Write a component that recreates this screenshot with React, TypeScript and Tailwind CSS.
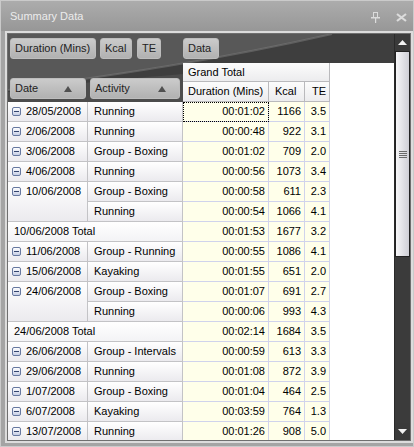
import React from 'react';

type Row = {
  kind: 'row' | 'total';
  date?: string;
  span?: number;
  act?: string;
  dur: string;
  kcal: string;
  te: string;
};

const rows: Row[] = [
  { kind: 'row', date: '28/05/2008', span: 1, act: 'Running', dur: '00:01:02', kcal: '1166', te: '3.5' },
  { kind: 'row', date: '2/06/2008', span: 1, act: 'Running', dur: '00:00:48', kcal: '922', te: '3.1' },
  { kind: 'row', date: '3/06/2008', span: 1, act: 'Group - Boxing', dur: '00:01:02', kcal: '709', te: '2.0' },
  { kind: 'row', date: '4/06/2008', span: 1, act: 'Running', dur: '00:00:56', kcal: '1073', te: '3.4' },
  { kind: 'row', date: '10/06/2008', span: 2, act: 'Group - Boxing', dur: '00:00:58', kcal: '611', te: '2.3' },
  { kind: 'row', act: 'Running', dur: '00:00:54', kcal: '1066', te: '4.1' },
  { kind: 'total', date: '10/06/2008 Total', dur: '00:01:53', kcal: '1677', te: '3.2' },
  { kind: 'row', date: '11/06/2008', span: 1, act: 'Group - Running', dur: '00:00:55', kcal: '1086', te: '4.1' },
  { kind: 'row', date: '15/06/2008', span: 1, act: 'Kayaking', dur: '00:01:55', kcal: '651', te: '2.0' },
  { kind: 'row', date: '24/06/2008', span: 2, act: 'Group - Boxing', dur: '00:01:07', kcal: '691', te: '2.7' },
  { kind: 'row', act: 'Running', dur: '00:00:06', kcal: '993', te: '4.3' },
  { kind: 'total', date: '24/06/2008 Total', dur: '00:02:14', kcal: '1684', te: '3.5' },
  { kind: 'row', date: '26/06/2008', span: 1, act: 'Group - Intervals', dur: '00:00:59', kcal: '613', te: '3.3' },
  { kind: 'row', date: '29/06/2008', span: 1, act: 'Running', dur: '00:01:08', kcal: '872', te: '3.9' },
  { kind: 'row', date: '1/07/2008', span: 1, act: 'Group - Boxing', dur: '00:01:04', kcal: '464', te: '2.5' },
  { kind: 'row', date: '6/07/2008', span: 1, act: 'Kayaking', dur: '00:03:59', kcal: '764', te: '1.3' },
  { kind: 'row', date: '13/07/2008', span: 1, act: 'Running', dur: '00:01:26', kcal: '908', te: '5.0' },
];

const MinusBox = () => (
  <span className="w-[9px] h-[9px] rounded-[2px] border border-[#66789f] bg-linear-to-b from-white to-[#c6cee4] flex items-center justify-center shrink-0">
    <span className="w-[5px] h-[1px] bg-[#33446e]" />
  </span>
);

const SortArrow = () => (
  <svg width="8" height="6" viewBox="0 0 8 6" className="shrink-0">
    <path d="M4 0 L8 6 L0 6 Z" fill="#505050" />
  </svg>
);

const btn =
  'h-[21px] rounded-[3px] bg-linear-to-b from-[#cbcbcb] to-[#b1b1b1] border border-[#bdbdbd] flex items-center pl-[4px] text-[#222] whitespace-nowrap';

const FieldButton: React.FC<{ label: string; w: string }> = ({ label, w }) => (
  <div className={`${w} ${btn}`}>{label}</div>
);

const rowHead = 'bg-linear-to-b from-white to-[#ebeaee] border-r border-b border-[#c3c3c6]';
const dataCell = 'bg-[#ffffea] border-r border-b border-[#d0d3ec] flex items-center justify-end pr-[3px] h-[20px]';
const colHead = 'border-r border-b border-[#b9b9bc] bg-linear-to-b from-[#fcfcfc] to-[#ececee] flex items-center';

export default function App() {
  return (
    <div className="w-[414px] h-[447px] flex flex-col bg-[#a4a4a4] border border-[#cacaca] overflow-hidden font-['Liberation_Sans',Arial,sans-serif] text-[11px] leading-none">
      {/* Title bar */}
      <div className="h-[30px] shrink-0 flex items-center justify-between pl-[9px] pr-[6px] bg-linear-to-b from-[#acacac] to-[#979797]">
        <span className="text-[#ececec] text-[11px]">Summary Data</span>
        <div className="flex items-center gap-[15px] pt-[2px]">
          <svg width="10" height="11" viewBox="0 0 10 11">
            <rect x="2.5" y="0.5" width="4" height="5" fill="none" stroke="#dcdcdc" />
            <rect x="0" y="5" width="9" height="1.5" fill="#dcdcdc" />
            <rect x="4" y="6" width="1.2" height="5" fill="#dcdcdc" />
          </svg>
          <svg width="11" height="9" viewBox="0 0 11 9">
            <path d="M1 1 L10 8 M10 1 L1 8" stroke="#dcdcdc" strokeWidth="2.2" />
          </svg>
        </div>
      </div>

      {/* Body frame */}
      <div className="flex-1 min-h-0 flex pl-[4px] pb-[3px]">
        <div className="flex-1 min-h-0 flex border-2 border-[#dcdcdc]">
          <div className="flex-1 min-h-0 flex border border-[#6f6f6f]">
            {/* Pivot grid */}
            <div className="flex-1 min-w-0 flex flex-col bg-white overflow-hidden">
              {/* Header area */}
              <div className="relative h-[68px] shrink-0 bg-[#3d3d3d]">
                <svg className="absolute inset-0" width="386" height="68" viewBox="0 0 386 68">
                  <path d="M0 0 H324 C 280 10, 220 22, 160 32 C 100 42, 40 50, 0 56 Z" fill="#585858" />
                  <path d="M0 56 C 40 50, 100 42, 160 32 C 220 22, 280 10, 324 0 H386 V68 H0 Z" fill="#3e3e3e" />
                  <path d="M0 68 V58 C 40 52, 100 46, 175 40 V68 Z" fill="#4c4c4c" />
                  <path d="M324 0 C 280 10, 220 22, 160 32 C 100 42, 40 50, 0 56" fill="none" stroke="#7a7a7a" strokeOpacity="0.55" strokeWidth="2" />
                </svg>
                <div className="relative flex flex-col h-full">
                  {/* Filter fields row */}
                  <div className="h-[29px] flex items-start pt-[4px] pl-[2px]">
                    <FieldButton label="Duration (Mins)" w="w-[86px]" />
                    <div className="ml-[4px]"><FieldButton label="Kcal" w="w-[32px]" /></div>
                    <div className="ml-[5px]"><FieldButton label="TE" w="w-[24px]" /></div>
                    <div className="ml-[22px]"><FieldButton label="Data" w="w-[36px]" /></div>
                  </div>
                  <div className="flex-1 flex">
                    {/* Row field buttons */}
                    <div className="w-[175px] flex items-start pt-[15px] pl-[2px] gap-[4px]">
                      <div className={`w-[76px] ${btn}`}>
                        <span className="w-[49px]">Date</span>
                        <SortArrow />
                      </div>
                      <div className={`w-[90px] ${btn}`}>
                        <span className="w-[63px]">Activity</span>
                        <SortArrow />
                      </div>
                    </div>
                    {/* Column headers */}
                    <div className="flex-1 bg-white flex flex-col">
                      <div className={`w-[147px] h-[19px] pl-[5px] ${colHead}`}>Grand Total</div>
                      <div className="flex h-[20px]">
                        <div className={`w-[86px] pl-[5px] ${colHead}`}>Duration (Mins)</div>
                        <div className={`w-[36px] pl-[6px] ${colHead}`}>Kcal</div>
                        <div className={`w-[25px] pl-[7px] ${colHead}`}>TE</div>
                      </div>
                    </div>
                  </div>
                </div>
              </div>

              {/* Data rows */}
              <div className="grid grid-cols-[80px_95px_86px_36px_25px] auto-rows-[20px] text-black">
                {rows.map((r, i) => (
                  <React.Fragment key={i}>
                    {r.kind === 'total' ? (
                      <div className={`col-start-1 col-span-2 ${rowHead} from-[#fefefe] to-[#f3f3f5] flex items-center pl-[6px]`}>
                        {r.date}
                      </div>
                    ) : (
                      <>
                        {r.date && (
                          <div className={`col-start-1 ${r.span === 2 ? 'row-span-2' : ''} ${rowHead}`}>
                            <div className="h-[19px] flex items-center pl-[4px] gap-[5px]">
                              <MinusBox />
                              <span>{r.date}</span>
                            </div>
                          </div>
                        )}
                        <div className={`col-start-2 ${rowHead} flex items-center pl-[6px]`}>{r.act}</div>
                      </>
                    )}
                    <div className={`col-start-3 ${dataCell} ${i === 0 ? 'outline-1 outline-dotted outline-black -outline-offset-1' : ''}`}>
                      {r.dur}
                    </div>
                    <div className={`col-start-4 ${dataCell}`}>{r.kcal}</div>
                    <div className={`col-start-5 ${dataCell}`}>{r.te}</div>
                  </React.Fragment>
                ))}
              </div>
            </div>

            {/* Scrollbar */}
            <div className="w-[16px] shrink-0 flex flex-col bg-[#3a3a3a] border-l border-[#2a2a2a]">
              <div className="h-[17px] flex items-center justify-center">
                <svg width="9" height="5" viewBox="0 0 9 5">
                  <path d="M4.5 0 L9 5 L0 5 Z" fill="#f2f2f2" />
                </svg>
              </div>
              <div className="h-[206px] border border-[#222] bg-linear-to-r from-[#f6f6f8] to-[#cfcfd6] flex flex-col items-center justify-center gap-[1px]">
                <span className="w-[8px] h-[1px] bg-[#6a6a6a]" />
                <span className="w-[8px] h-[1px] bg-[#6a6a6a]" />
                <span className="w-[8px] h-[1px] bg-[#6a6a6a]" />
                <span className="w-[8px] h-[1px] bg-[#6a6a6a]" />
              </div>
              <div className="flex-1 bg-[#3b3b3b]" />
              <div className="h-[17px] flex items-center justify-center">
                <svg width="9" height="5" viewBox="0 0 9 5">
                  <path d="M0 0 L9 0 L4.5 5 Z" fill="#f2f2f2" />
                </svg>
              </div>
            </div>
          </div>
        </div>
      </div>
    </div>
  );
}
